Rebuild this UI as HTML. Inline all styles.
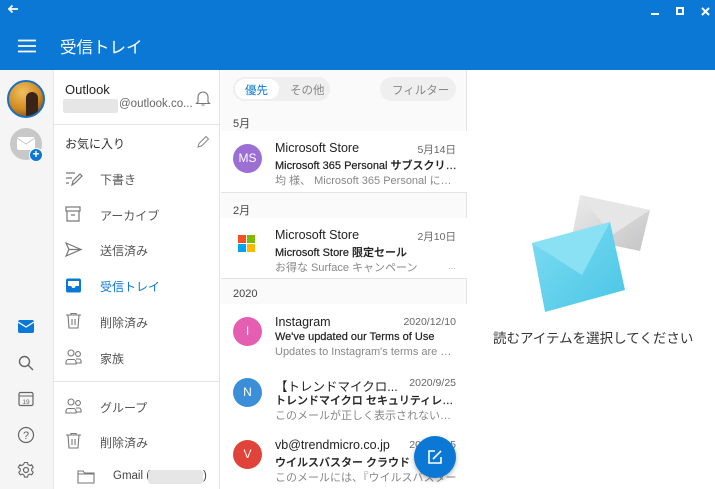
<!DOCTYPE html>
<html><head><meta charset="utf-8"><style>
*{margin:0;padding:0;box-sizing:border-box}
body{width:715px;height:489px;overflow:hidden;font-family:"Liberation Sans","Noto Sans CJK JP",sans-serif;background:#fff;position:relative;color:#222}
.a{position:absolute;white-space:nowrap}
.hdr{left:0;top:0;width:715px;height:70px;background:#0a78d4}
.rail{left:0;top:70px;width:53px;height:419px;background:#f5f5f5}
.fp{left:53px;top:70px;width:167px;height:419px;background:#fff;border-left:1px solid #e6e6e6;border-right:1px solid #e3e3e3}
.ml{left:221px;top:70px;width:246px;height:419px;background:#fafafa;border-right:1px solid #e3e3e3}
.fi{font-size:12px;color:#555;left:100px}
.ic{left:64px}
.sec{font-size:11px;color:#444;left:233px}
.nm{font-size:12.5px;color:#222;left:275px}
.sb{font-size:11px;color:#222;left:275px;font-weight:500;width:182px;overflow:hidden;text-overflow:ellipsis;-webkit-text-stroke:0.2px #222}
.pv{font-size:11px;color:#888;left:275px;width:182px;overflow:hidden;text-overflow:ellipsis}
.dt{font-size:10.5px;color:#666;right:259px}
.av{width:29px;height:29px;border-radius:50%;color:#fff;font-size:12px;text-align:center;line-height:29px;left:233px}
.card{left:221px;width:246px;background:#fff}
</style></head><body>
<div class="a hdr"></div>
<svg class="a" style="left:6px;top:3px" width="14" height="12" viewBox="0 0 14 12"><path d="M12 6H3M6.5 2.5L3 6l3.5 3.5" stroke="#fff" stroke-width="1.8" fill="none"/></svg>
<div class="a" style="left:651px;top:13px;width:8px;height:2px;background:#fff"></div>
<div class="a" style="left:676px;top:7px;width:8px;height:8px;border:2px solid #fff"></div>
<svg class="a" style="left:701px;top:7px" width="9" height="9"><path d="M1 1l7 7M8 1L1 8" stroke="#fff" stroke-width="2"/></svg>
<svg class="a" style="left:18px;top:39px" width="18" height="14"><path d="M0 1.5h18M0 7h18M0 12.5h18" stroke="#fff" stroke-width="1.7"/></svg>
<div class="a" style="left:60px;top:34px;font-size:16.5px;color:#fff">受信トレイ</div>

<div class="a rail"></div>
<div class="a" style="left:7px;top:80px;width:38px;height:38px;border-radius:50%;border:2px solid #1a6fc0;background:radial-gradient(circle at 40% 30%,#f0c060,#d08a20 55%,#5a3010);overflow:hidden"><div style="position:absolute;left:17px;top:10px;width:12px;height:26px;background:#3a2418;border-radius:6px 6px 0 0"></div></div>
<div class="a" style="left:10px;top:128px;width:32px;height:32px;border-radius:50%;background:#c8c8c8"></div>
<svg class="a" style="left:17px;top:137px" width="18" height="13"><rect x="0" y="0" width="18" height="13" rx="2" fill="#fff"/><path d="M0 1l9 6 9-6" stroke="#c8c8c8" fill="none"/></svg>
<div class="a" style="left:29px;top:148px;width:14px;height:14px;border-radius:50%;background:#0a78d4;border:1.5px solid #fff;color:#fff;font-size:12px;line-height:10px;text-align:center;font-weight:bold">+</div>
<svg class="a" style="left:18px;top:320px" width="16" height="13"><rect width="16" height="13" rx="2" fill="#0a78d4"/><path d="M0 2l8 5 8-5" stroke="#fff" stroke-width="1.3" fill="none"/></svg>
<svg class="a" style="left:18px;top:355px" width="16" height="16"><circle cx="6.5" cy="6.5" r="5" stroke="#666" stroke-width="1.4" fill="none"/><path d="M10 10l5 5" stroke="#666" stroke-width="1.4"/></svg>
<svg class="a" style="left:18px;top:391px" width="16" height="16"><rect x="1" y="1.5" width="14" height="13" rx="1.5" stroke="#666" stroke-width="1.2" fill="none"/><path d="M1 5h14" stroke="#666"/><text x="8" y="13" font-size="6.5" text-anchor="middle" fill="#666" font-family="Liberation Sans">19</text></svg>
<svg class="a" style="left:17px;top:426px" width="18" height="18"><circle cx="9" cy="9" r="7.5" stroke="#666" stroke-width="1.2" fill="none"/><text x="9" y="13" font-size="11" text-anchor="middle" fill="#666" font-family="Liberation Sans">?</text></svg>
<svg class="a" style="left:17px;top:461px" width="18" height="18" viewBox="0 0 18 18"><circle cx="9" cy="9" r="2.5" stroke="#666" stroke-width="1.2" fill="none"/><path d="M7.5 1.5h3l.5 2 1.7 1 2-.7 1.5 2.6-1.5 1.4v2l1.5 1.4-1.5 2.6-2-.7-1.7 1-.5 2h-3l-.5-2-1.7-1-2 .7-1.5-2.6 1.5-1.4v-2L1.3 6.4l1.5-2.6 2 .7 1.7-1z" stroke="#666" stroke-width="1.1" fill="none"/></svg>

<div class="a fp"></div>
<div class="a" style="left:65px;top:82px;font-size:13px;color:#222">Outlook</div>
<div class="a" style="left:63px;top:99px;width:55px;height:14px;background:#e6e6e6;border-radius:2px"></div>
<div class="a" style="left:119px;top:98px;font-size:11.5px;color:#666">@outlook.co...</div>
<svg class="a" style="left:195px;top:89px" width="16" height="18"><path d="M3 13V8a5 5 0 0110 0v5l1.5 1.5h-13z" stroke="#777" stroke-width="1.1" fill="none"/><path d="M6.5 16h3" stroke="#777"/></svg>
<div class="a" style="left:53px;top:124px;width:167px;height:1px;background:#e3e3e3"></div>
<div class="a" style="left:65px;top:135px;font-size:12px;color:#333">お気に入り</div>
<svg class="a" style="left:196px;top:135px" width="14" height="14"><path d="M2 12l1-3.5 7-7 2.5 2.5-7 7z" stroke="#888" stroke-width="1" fill="none"/></svg>

<svg class="a ic" style="top:170px" width="20" height="17"><path d="M2 3h9M2 8h6M2 13h3M8 15l1-4 7-7 2 2-7 7z" stroke="#777" stroke-width="1.2" fill="none"/></svg>
<div class="a fi" style="top:171px">下書き</div>
<svg class="a ic" style="top:206px" width="20" height="17"><rect x="2" y="1" width="14" height="4" stroke="#777" stroke-width="1.2" fill="none"/><path d="M3 5v10h12V5M7 9h4" stroke="#777" stroke-width="1.2" fill="none"/></svg>
<div class="a fi" style="top:207px">アーカイブ</div>
<svg class="a ic" style="top:241px" width="20" height="17"><path d="M2 2l15 6.5L2 15l3-6.5z M5 8.5h12" stroke="#777" stroke-width="1.2" fill="none"/></svg>
<div class="a fi" style="top:242px">送信済み</div>
<svg class="a ic" style="top:277px" width="20" height="17"><rect x="2" y="1.5" width="15" height="14" rx="2" fill="#0a78d4"/><path d="M4 4h11v5h-3.5a2 2 0 01-4 0H4z" fill="#fff"/></svg>
<div class="a fi" style="top:278px;color:#0a78d4">受信トレイ</div>
<svg class="a ic" style="top:312px" width="20" height="18"><path d="M2 3h15M7 3V1.5h5V3M4 3l1 13h9l1-13M8 7v6M11 7v6" stroke="#777" stroke-width="1.1" fill="none"/></svg>
<div class="a fi" style="top:314px">削除済み</div>
<svg class="a ic" style="top:348px" width="20" height="18"><circle cx="7" cy="5" r="3" stroke="#777" stroke-width="1.1" fill="none"/><circle cx="14" cy="6" r="2.4" stroke="#777" stroke-width="1.1" fill="none"/><path d="M2 16v-2a2.5 2.5 0 012.5-2.5h5A2.5 2.5 0 0112 14v2zM12 11h3a2 2 0 012 2v2h-5" stroke="#777" stroke-width="1.1" fill="none"/></svg>
<div class="a fi" style="top:350px">家族</div>
<div class="a" style="left:53px;top:381px;width:167px;height:1px;background:#e3e3e3"></div>
<svg class="a ic" style="top:397px" width="20" height="18"><circle cx="7" cy="5" r="3" stroke="#777" stroke-width="1.1" fill="none"/><circle cx="14" cy="6" r="2.4" stroke="#777" stroke-width="1.1" fill="none"/><path d="M2 16v-2a2.5 2.5 0 012.5-2.5h5A2.5 2.5 0 0112 14v2zM12 11h3a2 2 0 012 2v2h-5" stroke="#777" stroke-width="1.1" fill="none"/></svg>
<div class="a fi" style="top:399px">グループ</div>
<svg class="a ic" style="top:432px" width="20" height="18"><path d="M2 3h15M7 3V1.5h5V3M4 3l1 13h9l1-13M8 7v6M11 7v6" stroke="#777" stroke-width="1.1" fill="none"/></svg>
<div class="a fi" style="top:434px">削除済み</div>
<svg class="a" style="left:77px;top:469px" width="18" height="15"><path d="M1 2h5l1.5 2H17v10H1z M1 5h16" stroke="#777" stroke-width="1.1" fill="none"/></svg>
<div class="a" style="left:113px;top:470px;font-size:11.5px;color:#444">Gmail (</div>
<div class="a" style="left:148px;top:470px;width:55px;height:14px;background:#e6e6e6;border-radius:3px"></div>
<div class="a" style="left:203px;top:470px;font-size:11.5px;color:#444">)</div>

<div class="a ml"></div>
<div class="a" style="left:233px;top:77px;width:97px;height:24px;border-radius:12px;background:#efefef"></div>
<div class="a" style="left:235px;top:79px;width:44px;height:20px;border-radius:10px;background:#fff"></div>
<div class="a" style="left:245px;top:82px;font-size:11.5px;color:#0a78d4">優先</div>
<div class="a" style="left:290px;top:82px;font-size:11.5px;color:#888">その他</div>
<div class="a" style="left:380px;top:77px;width:76px;height:24px;border-radius:12px;background:#efefef"></div>
<div class="a" style="left:392px;top:82px;font-size:11.5px;color:#888">フィルター</div>

<div class="a sec" style="top:115px">5月</div>
<div class="a card" style="top:131px;height:61px"></div>
<div class="a av" style="top:144px;background:#9b6fd4">MS</div>
<div class="a nm" style="top:141px">Microsoft Store</div>
<div class="a dt" style="top:142px">5月14日</div>
<div class="a sb" style="top:157px">Microsoft 365 Personal サブスクリプ...</div>
<div class="a pv" style="top:172px">均 様、 Microsoft 365 Personal にご...</div>
<div class="a" style="left:221px;top:192px;width:246px;height:1px;background:#e3e3e3"></div>

<div class="a sec" style="top:202px">2月</div>
<div class="a card" style="top:218px;height:60px"></div>
<div class="a" style="left:238px;top:235px;width:8px;height:8px;background:#f25022"></div>
<div class="a" style="left:247px;top:235px;width:8px;height:8px;background:#7fba00"></div>
<div class="a" style="left:238px;top:244px;width:8px;height:8px;background:#00a4ef"></div>
<div class="a" style="left:247px;top:244px;width:8px;height:8px;background:#ffb900"></div>
<div class="a nm" style="top:228px">Microsoft Store</div>
<div class="a dt" style="top:229px">2月10日</div>
<div class="a sb" style="top:244px">Microsoft Store 限定セール</div>
<div class="a pv" style="top:259px">お得な Surface キャンペーン</div>
<div class="a" style="left:448px;top:261px;font-size:9px;color:#aaa">...</div>
<div class="a" style="left:221px;top:278px;width:246px;height:1px;background:#e3e3e3"></div>

<div class="a sec" style="top:288px">2020</div>
<div class="a card" style="top:304px;height:185px"></div>
<div class="a av" style="top:317px;background:#e45fb2">I</div>
<div class="a nm" style="top:315px">Instagram</div>
<div class="a dt" style="top:316px">2020/12/10</div>
<div class="a sb" style="top:331px">We've updated our Terms of Use</div>
<div class="a pv" style="top:346px">Updates to Instagram's terms are effe...</div>
<div class="a av" style="top:378px;background:#3a8fd8">N</div>
<div class="a nm" style="top:376px;width:135px">【トレンドマイクロ...</div>
<div class="a dt" style="top:377px">2020/9/25</div>
<div class="a sb" style="top:392px">トレンドマイクロ セキュリティレポ...</div>
<div class="a pv" style="top:407px">このメールが正しく表示されない場...</div>
<div class="a av" style="top:440px;background:#e0433a">V</div>
<div class="a nm" style="top:438px">vb@trendmicro.co.jp</div>
<div class="a dt" style="top:439px">2020/9/25</div>
<div class="a sb" style="top:454px">ウイルスバスター クラウド</div>
<div class="a pv" style="top:469px">このメールには、『ウイルスバスター</div>
<div class="a" style="left:414px;top:436px;width:42px;height:42px;border-radius:50%;background:#0a78d4;box-shadow:0 2px 5px rgba(0,0,0,.3)"></div>
<svg class="a" style="left:427px;top:449px" width="16" height="16"><path d="M8 2H2v12h12V8" stroke="#fff" stroke-width="1.6" fill="none"/><path d="M6 10l8-8" stroke="#fff" stroke-width="1.6"/></svg>

<svg class="a" style="left:520px;top:185px" width="140" height="140" viewBox="0 0 140 140">
<defs><linearGradient id="g1" x1="0" y1="0" x2="1" y2="1"><stop offset="0" stop-color="#ececec"/><stop offset="1" stop-color="#c4c4c4"/></linearGradient>
<linearGradient id="g2" x1="0" y1="0" x2="1" y2="1"><stop offset="0" stop-color="#80dcf2"/><stop offset="1" stop-color="#48c6e6"/></linearGradient></defs>
<path d="M60 10L130 25 120 66 52 52z" fill="url(#g1)"/><path d="M60 10L92 50 130 25z" fill="#e6e6e6"/>
<path d="M12 58L90 37 105 105 25 127z" fill="url(#g2)"/><path d="M12 58L62 90 90 37z" fill="#8be1f4"/>
</svg>
<div class="a" style="left:493px;top:327px;font-size:13.5px;color:#333">読むアイテムを選択してください</div>
</body></html>
